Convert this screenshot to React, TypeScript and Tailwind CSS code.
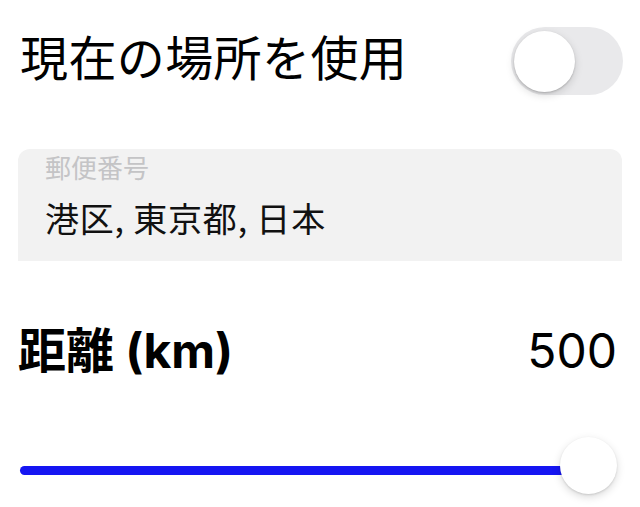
import React from "react";

const cjk = '"Noto Sans CJK JP", "Noto Sans", sans-serif';
const mixed = 'Inter, "Noto Sans CJK JP", sans-serif';

export default function App() {
  return (
    <div className="w-[640px] h-[507px] bg-white overflow-hidden pl-[18px] pr-[17px] flex flex-col text-black">
      <div className="mt-[27px] flex items-center justify-between">
        <div className="pl-[2px] text-[48px] leading-none mb-[13px] tracking-[0.4px]" style={{ fontFamily: cjk }}>
          現在の場所を使用
        </div>
        <div className="relative w-[112px] h-[68px] rounded-full bg-[#e9e9eb]">
          <div className="absolute left-[3px] top-[4px] w-[61px] h-[61px] rounded-full bg-white shadow-[0_3px_8px_rgba(0,0,0,0.15),0_1px_2px_rgba(0,0,0,0.18)]" />
        </div>
      </div>

      <div
        className="mt-[54px] w-[604px] h-[112px] rounded-t-[12px] bg-[#f2f2f2] pl-[27px] pt-[5px] flex flex-col"
        style={{ fontFamily: cjk }}
      >
        <div className="text-[26px] leading-none text-[#c4c4c6]">郵便番号</div>
        <div className="mt-[21px] text-[34px] leading-none text-[#111] tracking-[0.8px]">港区, 東京都, 日本</div>
      </div>

      <div className="mt-[66px] flex items-center justify-between" style={{ fontFamily: mixed }}>
        <div className="text-[48px] leading-none font-bold">距離 (km)</div>
        <div className="text-[48px] leading-none font-normal pr-[6px]">500</div>
      </div>

      <div className="mt-[62px] ml-[2px] w-[597px] h-[57px] relative flex items-start">
        <div className="mt-[29px] w-[570px] h-[9px] rounded-full bg-[#1515f2]" />
        <div className="absolute right-0 top-0 w-[57px] h-[57px] rounded-full bg-white shadow-[0_3px_8px_rgba(0,0,0,0.15),0_1px_2px_rgba(0,0,0,0.12)]" />
      </div>
    </div>
  );
}
